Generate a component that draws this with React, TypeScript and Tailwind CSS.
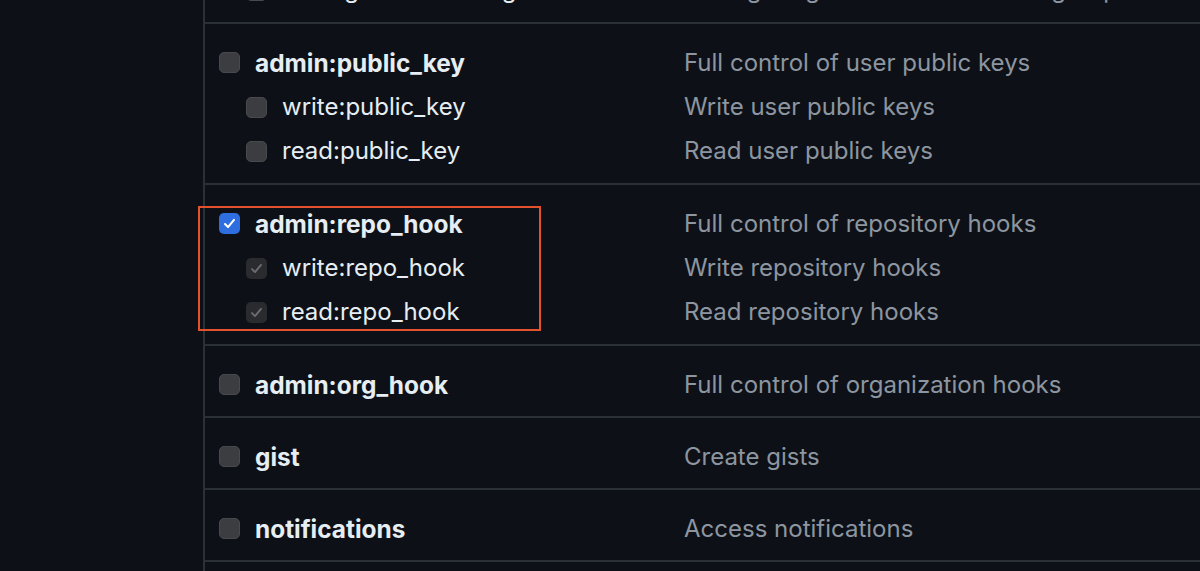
import { type ReactNode } from 'react'

type Scope = {
  name: string
  description: string
  checked?: boolean
  disabled?: boolean
}

type ScopeGroup = {
  parent: Scope
  children: Scope[]
  highlight?: boolean
}

const groups: ScopeGroup[] = [
  {
    parent: { name: 'admin:org', description: 'Full control of orgs and teams, read and write org projects' },
    children: [
      { name: 'write:org', description: 'Read and write org and team membership, read and write org projects' },
      { name: 'read:org', description: 'Read org and team membership, read org projects' },
      { name: 'manage_runners:org', description: 'Manage org runners and runner groups' }
    ]
  },
  {
    parent: { name: 'admin:public_key', description: 'Full control of user public keys' },
    children: [
      { name: 'write:public_key', description: 'Write user public keys' },
      { name: 'read:public_key', description: 'Read user public keys' }
    ]
  },
  {
    parent: { name: 'admin:repo_hook', description: 'Full control of repository hooks', checked: true },
    children: [
      { name: 'write:repo_hook', description: 'Write repository hooks', checked: true, disabled: true },
      { name: 'read:repo_hook', description: 'Read repository hooks', checked: true, disabled: true }
    ],
    highlight: true
  },
  { parent: { name: 'admin:org_hook', description: 'Full control of organization hooks' }, children: [] },
  { parent: { name: 'gist', description: 'Create gists' }, children: [] },
  { parent: { name: 'notifications', description: 'Access notifications' }, children: [] },
  { parent: { name: 'user', description: 'Update ALL user data' }, children: [] }
]

function Checkbox ({ checked, disabled }: { checked?: boolean, disabled?: boolean }) {
  if (checked === true && disabled !== true) {
    return (
      <span className="flex items-center justify-center w-[21px] h-[21px] rounded-[5px] bg-[#2f6ee0] shrink-0">
        <svg viewBox="0 0 16 16" className="w-[15px] h-[15px]" fill="none">
          <path d="M3.2 8.6 L6.4 11.8 L12.8 4.2" stroke="#ffffff" strokeWidth="2.2" strokeLinecap="round" strokeLinejoin="round" />
        </svg>
      </span>
    )
  }
  if (checked === true) {
    return (
      <span className="flex items-center justify-center w-[21px] h-[21px] rounded-[5px] bg-[#2a2b2e] shrink-0">
        <svg viewBox="0 0 16 16" className="w-[15px] h-[15px]" fill="none">
          <path d="M3.2 8.6 L6.4 11.8 L12.8 4.2" stroke="#6c6d70" strokeWidth="2" strokeLinecap="round" strokeLinejoin="round" />
        </svg>
      </span>
    )
  }
  return (
    <span className="w-[21px] h-[21px] rounded-[5px] bg-[#3c3d40] border border-[#48494c] shrink-0" />
  )
}

function ScopeRow ({ scope, sub }: { scope: Scope, sub?: boolean }) {
  return (
    <div className="grid grid-cols-[479px_1fr] h-[44px] items-center">
      <label className={`flex items-center gap-[15px] ${sub === true ? 'pl-[41px]' : 'pl-[14px]'}`}>
        <Checkbox checked={scope.checked} disabled={scope.disabled} />
        <span className={`text-[#e6edf3] whitespace-nowrap ${sub === true ? 'font-normal' : 'font-bold text-[24.4px]'}`}>
          {scope.name}
        </span>
      </label>
      <span className="text-[#8d96a0] whitespace-nowrap">{scope.description}</span>
    </div>
  )
}

function Group ({ group }: { group: ScopeGroup }) {
  let box: ReactNode = null
  if (group.highlight === true) {
    box = (
      <div className="absolute left-[-7px] top-[21px] w-[343px] h-[125px] border-[2.5px] border-[#e3522d] pointer-events-none" />
    )
  }
  const pad = group.children.length > 0 ? 'pb-[10px]' : 'pb-[9px]'
  return (
    <div className={`relative border-b-2 border-[#2b2f36] pt-[17px] ${pad}`}>
      <ScopeRow scope={group.parent} />
      {group.children.map(child => (
        <ScopeRow key={child.name} scope={child} sub />
      ))}
      {box}
    </div>
  )
}

export default function App () {
  return (
    <div className="h-[571px] overflow-hidden bg-[#0d1117] font-['Inter',sans-serif] text-[24px]">
      <div className="ml-[203px] border-l-2 border-[#2b2f36] -mt-[181px]">
        {groups.map(group => (
          <Group key={group.parent.name} group={group} />
        ))}
      </div>
    </div>
  )
}
